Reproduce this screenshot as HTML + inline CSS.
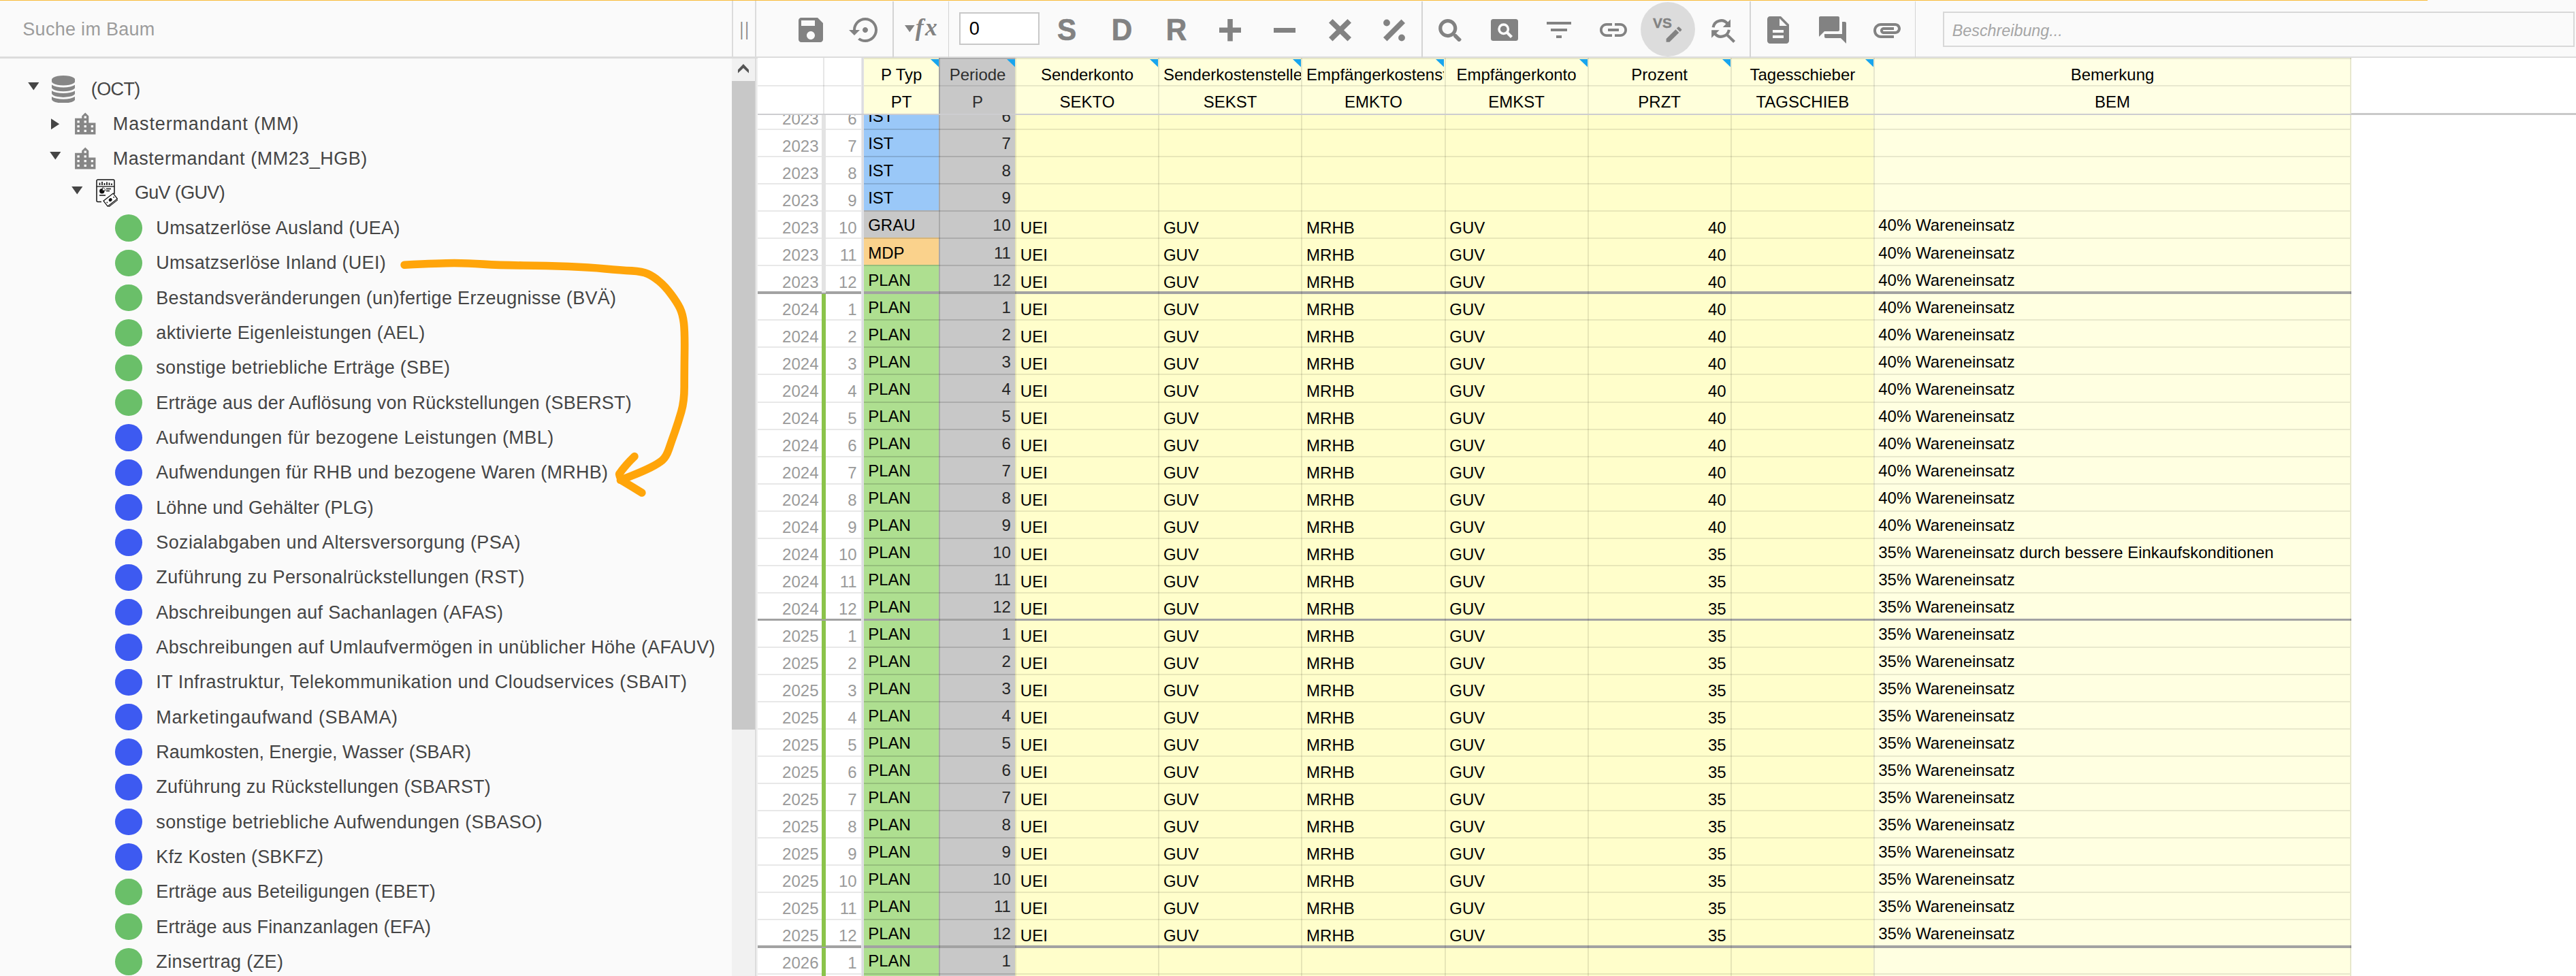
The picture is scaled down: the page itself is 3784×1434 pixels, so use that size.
<!DOCTYPE html>
<html lang="de"><head><meta charset="utf-8"><title>OCT</title>
<style>
*{box-sizing:border-box}
html,body{margin:0;padding:0}
body{width:3784px;height:1434px;overflow:hidden;background:#fafafa;position:relative;font-family:"Liberation Sans",sans-serif}
.abs{position:absolute;display:block}
.tt{position:absolute;white-space:nowrap;font-size:27px;line-height:40px;height:40px;color:#454545}
.dot{width:39.6px;height:39.6px;border-radius:50%}
.gt{position:absolute;white-space:nowrap;font-size:24px;line-height:30px;height:30px;color:#000}
.gt.rh{color:#9a9a9a}
.gt.pd{color:#262626}
.hl{height:2px;background:rgba(0,0,0,.092)}
.vl{width:2px;background:rgba(0,0,0,.095)}
.hc{position:absolute;overflow:hidden;white-space:nowrap;font-size:24px;line-height:30px;height:30px}
.search{left:33.3px;top:23.2px;font-size:27px;letter-spacing:.29px;line-height:40px;color:#9c9c9c;white-space:nowrap}
.fx{left:1344.7px;top:15.600px;font-family:"Liberation Serif","DejaVu Serif",serif;font-style:italic;font-weight:bold;font-size:35.5px;line-height:48px;color:#828282;letter-spacing:2.5px}
.inp0{left:1409px;top:18.2px;width:118px;height:47.6px;border:2px solid #c8c8c8;background:#fff;font-size:27.2px;color:#000}
.inp0 span{position:absolute;left:12.8px;top:6.700px;line-height:30px}
.sdr{top:16px;width:60px;height:56px;text-align:center;font-weight:bold;font-size:43.5px;line-height:56px;color:#828282;-webkit-text-stroke:.7px #828282;transform:scaleX(.97)}
.vs{left:2428px;top:20.8px;font-weight:bold;font-size:20.8px;line-height:26px;color:#828282;letter-spacing:.2px;-webkit-text-stroke:.4px #828282}
.besch{left:2854px;top:17px;width:927.5px;height:51.8px;border:2px solid #d8d8d8;font-style:italic;font-size:23.3px;color:#a6a6a6}
.besch span{position:absolute;left:11.8px;top:8.900px;line-height:34px}
</style></head>
<body>
<div class="abs" style="left:0;top:83.4px;width:3784px;height:2.5px;background:#dcdcdc"></div>
<div class="abs" style="left:1075.2px;top:1.3px;width:1.8px;height:83px;background:#dcdcdc"></div>
<div class="abs" style="left:1109.4px;top:1.3px;width:1.8px;height:1433px;background:#dcdcdc;z-index:3"></div>
<div class="abs" style="left:1078.3px;top:22.500px;width:32.600px;height:40px;text-align:center;font-size:27.5px;line-height:40px;color:#8a8a8a;letter-spacing:2.600px;transform:scaleX(.8)">||</div>
<div class="abs" style="left:1075px;top:85.9px;width:34.2px;height:1349px;background:#f1f1f1"></div>
<div class="abs" style="left:1075px;top:118.8px;width:34.2px;height:952.8px;background:#c8c8c8"></div>
<svg class="abs" style="left:1080px;top:90px" width="24" height="20" viewBox="1080 90 24 20"><path d="M1083.970 102.500L1091.960 93.900 1099.950 102.500V107.600L1091.960 100.100 1083.970 107.600Z" fill="#555"/></svg>
<div class="abs search">Suche im Baum</div>
<div class="tt" id="t0" style="left:133.8px;top:111.15px;letter-spacing:-0.622px">(OCT)</div>
<svg class="abs" style="left:41px;top:121.4px" width="17" height="12" viewBox="0 0 17 12"><path d="M0.2 0H16.4L8.3 11.6Z" fill="#454545"/></svg>
<svg class="abs" style="left:75.9px;top:110.80px" width="34.2" height="40.6" viewBox="0 0 1536 1792" preserveAspectRatio="none" fill="#868686"><path d="M768 768q237 0 443-43t325-127v170q0 69-103 128t-280 93.5-385 34.5-385-34.5-280-93.5-103-128v-170q119 84 325 127t443 43zM768 1536q237 0 443-43t325-127v170q0 69-103 128t-280 93.5-385 34.5-385-34.5-280-93.5-103-128v-170q119 84 325 127t443 43zM768 1152q237 0 443-43t325-127v170q0 69-103 128t-280 93.5-385 34.5-385-34.5-280-93.5-103-128v-170q119 84 325 127t443 43zM768 0q208 0 385 34.5t280 93.5 103 128v128q0 69-103 128t-280 93.5-385 34.5-385-34.5-280-93.5-103-128v-128q0-69 103-128t280-93.5 385-34.5z"/></svg>
<div class="tt" id="t1" style="left:165.8px;top:162.25px;letter-spacing:0.867px">Mastermandant (MM)</div>
<svg class="abs" style="left:74.8px;top:174.4px" width="13" height="17" viewBox="0 0 13 17"><path d="M0 0.2V16.2L12.2 8.2Z" fill="#454545"/></svg>
<svg class="abs" style="left:104.6px;top:162.20px" width="40.500" height="40.500" viewBox="0 0 24 24" fill="#868686"><path d="M15 11V5l-3-3-3 3v2H3v14h18V11h-6zm-8 8H5v-2h2v2zm0-4H5v-2h2v2zm0-4H5V9h2v2zm6 8h-2v-2h2v2zm0-4h-2v-2h2v2zm0-4h-2V9h2v2zm0-4h-2V5h2v2zm6 12h-2v-2h2v2zm0-4h-2v-2h2v2z"/></svg>
<div class="tt" id="t2" style="left:165.8px;top:213.05px;letter-spacing:0.517px">Mastermandant (MM23_HGB)</div>
<svg class="abs" style="left:73px;top:223.3px" width="17" height="12" viewBox="0 0 17 12"><path d="M0.2 0H16.4L8.3 11.6Z" fill="#454545"/></svg>
<svg class="abs" style="left:104.6px;top:213.00px" width="40.500" height="40.500" viewBox="0 0 24 24" fill="#868686"><path d="M15 11V5l-3-3-3 3v2H3v14h18V11h-6zm-8 8H5v-2h2v2zm0-4H5v-2h2v2zm0-4H5V9h2v2zm6 8h-2v-2h2v2zm0-4h-2v-2h2v2zm0-4h-2V9h2v2zm0-4h-2V5h2v2zm6 12h-2v-2h2v2zm0-4h-2v-2h2v2z"/></svg>
<div class="tt" id="t3" style="left:197.9px;top:263.45px;letter-spacing:-0.652px">GuV (GUV)</div>
<svg class="abs" style="left:105px;top:273.7px" width="17" height="12" viewBox="0 0 17 12"><path d="M0.2 0H16.4L8.3 11.6Z" fill="#454545"/></svg>
<svg class="abs" style="left:141.2px;top:263.1px" width="32" height="41" viewBox="0 0 32 41">
<path d="M8 33.5H2.6a1.6 1.6 0 0 1-1.6-1.6V2.6A1.6 1.6 0 0 1 2.600 1H25.400a1.600 1.600 0 0 1 1.600 1.600V22" fill="none" stroke="#111" stroke-width="1.5"/>
<path d="M1 11H27" stroke="#111" stroke-width="1.3"/>
<path d="M5.500 5.500v3.500M9 4v5M12.500 6v3M16 4.500v4.500M19.500 5.500v3.500M23 6.500v2.500" stroke="#111" stroke-width="1.700"/>
<circle cx="8.800" cy="17.800" r="3.700" fill="#111"/>
<path d="M9.600 17V12.800A4.200 4.200 0 0 1 13.800 17Z" fill="#fff" stroke="#111" stroke-width=".8"/>
<path d="M15 14.500h7M15 17.500h5M5 24h9" stroke="#111" stroke-width="1.300"/>
<g transform="rotate(-38 21.500 31)"><rect x="12.500" y="25.500" width="18" height="10" fill="#fff" stroke="#111" stroke-width="1.300"/><rect x="12.500" y="36.600" width="18" height="1.100" fill="#111"/><ellipse cx="21.500" cy="30.500" rx="2.700" ry="2.300" fill="#111"/><circle cx="15.300" cy="30.500" r=".9" fill="#111"/><circle cx="27.700" cy="30.500" r=".9" fill="#111"/></g>
</svg>
<div class="tt" id="t4" style="left:229.3px;top:314.95px;letter-spacing:0.339px">Umsatzerlöse Ausland (UEA)</div>
<div class="abs dot" style="left:169.2px;top:315.20px;background:#6abf69"></div>
<div class="tt" id="t5" style="left:229.3px;top:366.28px;letter-spacing:0.292px">Umsatzserlöse Inland (UEI)</div>
<div class="abs dot" style="left:169.2px;top:366.53px;background:#6abf69"></div>
<div class="tt" id="t6" style="left:229.3px;top:417.62px;letter-spacing:0.309px">Bestandsveränderungen (un)fertige Erzeugnisse (BVÄ)</div>
<div class="abs dot" style="left:169.2px;top:417.87px;background:#6abf69"></div>
<div class="tt" id="t7" style="left:229.3px;top:468.95px;letter-spacing:0.345px">aktivierte Eigenleistungen (AEL)</div>
<div class="abs dot" style="left:169.2px;top:469.20px;background:#6abf69"></div>
<div class="tt" id="t8" style="left:229.3px;top:520.28px;letter-spacing:0.294px">sonstige betriebliche Erträge (SBE)</div>
<div class="abs dot" style="left:169.2px;top:520.53px;background:#6abf69"></div>
<div class="tt" id="t9" style="left:229.3px;top:571.62px;letter-spacing:0.184px">Erträge aus der Auflösung von Rückstellungen (SBERST)</div>
<div class="abs dot" style="left:169.2px;top:571.87px;background:#6abf69"></div>
<div class="tt" id="t10" style="left:229.3px;top:622.95px;letter-spacing:0.439px">Aufwendungen für bezogene Leistungen (MBL)</div>
<div class="abs dot" style="left:169.2px;top:623.20px;background:#3d5af1"></div>
<div class="tt" id="t11" style="left:229.3px;top:674.28px;letter-spacing:0.228px">Aufwendungen für RHB und bezogene Waren (MRHB)</div>
<div class="abs dot" style="left:169.2px;top:674.53px;background:#3d5af1"></div>
<div class="tt" id="t12" style="left:229.3px;top:725.61px;letter-spacing:0.056px">Löhne und Gehälter (PLG)</div>
<div class="abs dot" style="left:169.2px;top:725.86px;background:#3d5af1"></div>
<div class="tt" id="t13" style="left:229.3px;top:776.95px;letter-spacing:0.366px">Sozialabgaben und Altersversorgung (PSA)</div>
<div class="abs dot" style="left:169.2px;top:777.20px;background:#3d5af1"></div>
<div class="tt" id="t14" style="left:229.3px;top:828.28px;letter-spacing:0.359px">Zuführung zu Personalrückstellungen (RST)</div>
<div class="abs dot" style="left:169.2px;top:828.53px;background:#3d5af1"></div>
<div class="tt" id="t15" style="left:229.3px;top:879.61px;letter-spacing:0.271px">Abschreibungen auf Sachanlagen (AFAS)</div>
<div class="abs dot" style="left:169.2px;top:879.86px;background:#3d5af1"></div>
<div class="tt" id="t16" style="left:229.3px;top:930.95px;letter-spacing:0.362px">Abschreibungen auf Umlaufvermögen in unüblicher Höhe (AFAUV)</div>
<div class="abs dot" style="left:169.2px;top:931.20px;background:#3d5af1"></div>
<div class="tt" id="t17" style="left:229.3px;top:982.28px;letter-spacing:0.456px">IT Infrastruktur, Telekommunikation und Cloudservices (SBAIT)</div>
<div class="abs dot" style="left:169.2px;top:982.53px;background:#3d5af1"></div>
<div class="tt" id="t18" style="left:229.3px;top:1033.61px;letter-spacing:0.615px">Marketingaufwand (SBAMA)</div>
<div class="abs dot" style="left:169.2px;top:1033.86px;background:#3d5af1"></div>
<div class="tt" id="t19" style="left:229.3px;top:1084.94px;letter-spacing:-0.044px">Raumkosten, Energie, Wasser (SBAR)</div>
<div class="abs dot" style="left:169.2px;top:1085.19px;background:#3d5af1"></div>
<div class="tt" id="t20" style="left:229.3px;top:1136.28px;letter-spacing:0.193px">Zuführung zu Rückstellungen (SBARST)</div>
<div class="abs dot" style="left:169.2px;top:1136.53px;background:#3d5af1"></div>
<div class="tt" id="t21" style="left:229.3px;top:1187.61px;letter-spacing:0.402px">sonstige betriebliche Aufwendungen (SBASO)</div>
<div class="abs dot" style="left:169.2px;top:1187.86px;background:#3d5af1"></div>
<div class="tt" id="t22" style="left:229.3px;top:1238.94px;letter-spacing:0.149px">Kfz Kosten (SBKFZ)</div>
<div class="abs dot" style="left:169.2px;top:1239.19px;background:#3d5af1"></div>
<div class="tt" id="t23" style="left:229.3px;top:1290.28px;letter-spacing:0.119px">Erträge aus Beteiligungen (EBET)</div>
<div class="abs dot" style="left:169.2px;top:1290.53px;background:#6abf69"></div>
<div class="tt" id="t24" style="left:229.3px;top:1341.61px;letter-spacing:0.099px">Erträge aus Finanzanlagen (EFA)</div>
<div class="abs dot" style="left:169.2px;top:1341.86px;background:#6abf69"></div>
<div class="tt" id="t25" style="left:229.3px;top:1392.94px;letter-spacing:0.362px">Zinsertrag (ZE)</div>
<div class="abs dot" style="left:169.2px;top:1393.19px;background:#6abf69"></div>
<div class="abs" style="left:1112.9px;top:85px;width:2671.1px;height:1349px;background:#fff"></div>
<div class="abs" style="left:1490.9px;top:168.8px;width:1261.1px;height:1265.2px;background:#fffecb"></div>
<div class="abs" style="left:2752.0px;top:168.8px;width:702.0px;height:1265.2px;background:#ffffe1"></div>
<div class="abs" style="left:1379.3px;top:168.8px;width:111.60000000000014px;height:1265.2px;background:#c8c8c8"></div>
<div class="abs" style="left:1269.0px;top:149.17px;width:110.29999999999995px;height:40.53px;background:#9ac8f8"></div>
<div class="gt rh" style="right:2581.5px;top:159.55px">2023</div>
<div class="gt rh" style="right:2525.3px;top:159.55px">6</div>
<div class="gt " style="left:1275.2px;top:156.35px">IST</div>
<div class="gt pd" style="right:2299.1px;top:156.35px">6</div>
<div class="abs" style="left:1269.0px;top:189.20px;width:110.29999999999995px;height:40.53px;background:#9ac8f8"></div>
<div class="gt rh" style="right:2581.5px;top:199.58px">2023</div>
<div class="gt rh" style="right:2525.3px;top:199.58px">7</div>
<div class="gt " style="left:1275.2px;top:196.38px">IST</div>
<div class="gt pd" style="right:2299.1px;top:196.38px">7</div>
<div class="abs" style="left:1269.0px;top:229.23px;width:110.29999999999995px;height:40.53px;background:#9ac8f8"></div>
<div class="gt rh" style="right:2581.5px;top:239.61px">2023</div>
<div class="gt rh" style="right:2525.3px;top:239.61px">8</div>
<div class="gt " style="left:1275.2px;top:236.41px">IST</div>
<div class="gt pd" style="right:2299.1px;top:236.41px">8</div>
<div class="abs" style="left:1269.0px;top:269.26px;width:110.29999999999995px;height:40.53px;background:#9ac8f8"></div>
<div class="gt rh" style="right:2581.5px;top:279.64px">2023</div>
<div class="gt rh" style="right:2525.3px;top:279.64px">9</div>
<div class="gt " style="left:1275.2px;top:276.44px">IST</div>
<div class="gt pd" style="right:2299.1px;top:276.44px">9</div>
<div class="abs" style="left:1269.0px;top:309.29px;width:110.29999999999995px;height:40.53px;background:#c8c8c8"></div>
<div class="gt rh" style="right:2581.5px;top:319.67px">2023</div>
<div class="gt rh" style="right:2525.3px;top:319.67px">10</div>
<div class="gt " style="left:1275.2px;top:316.47px">GRAU</div>
<div class="gt pd" style="right:2299.1px;top:316.47px">10</div>
<div class="gt " style="left:1498.8px;top:319.67px">UEI</div>
<div class="gt " style="left:1708.9px;top:319.67px">GUV</div>
<div class="gt " style="left:1919.1px;top:319.67px">MRHB</div>
<div class="gt " style="left:2129.3px;top:319.67px">GUV</div>
<div class="gt " style="right:1248.4px;top:319.67px">40</div>
<div class="gt " style="left:2759.2px;top:316.47px">40% Wareneinsatz</div>
<div class="abs" style="left:1269.0px;top:349.32px;width:110.29999999999995px;height:40.53px;background:#fad28c"></div>
<div class="gt rh" style="right:2581.5px;top:359.70px">2023</div>
<div class="gt rh" style="right:2525.3px;top:359.70px">11</div>
<div class="gt " style="left:1275.2px;top:356.50px">MDP</div>
<div class="gt pd" style="right:2299.1px;top:356.50px">11</div>
<div class="gt " style="left:1498.8px;top:359.70px">UEI</div>
<div class="gt " style="left:1708.9px;top:359.70px">GUV</div>
<div class="gt " style="left:1919.1px;top:359.70px">MRHB</div>
<div class="gt " style="left:2129.3px;top:359.70px">GUV</div>
<div class="gt " style="right:1248.4px;top:359.70px">40</div>
<div class="gt " style="left:2759.2px;top:356.50px">40% Wareneinsatz</div>
<div class="abs" style="left:1269.0px;top:389.35px;width:110.29999999999995px;height:40.53px;background:#aedf90"></div>
<div class="gt rh" style="right:2581.5px;top:399.73px">2023</div>
<div class="gt rh" style="right:2525.3px;top:399.73px">12</div>
<div class="gt " style="left:1275.2px;top:396.53px">PLAN</div>
<div class="gt pd" style="right:2299.1px;top:396.53px">12</div>
<div class="gt " style="left:1498.8px;top:399.73px">UEI</div>
<div class="gt " style="left:1708.9px;top:399.73px">GUV</div>
<div class="gt " style="left:1919.1px;top:399.73px">MRHB</div>
<div class="gt " style="left:2129.3px;top:399.73px">GUV</div>
<div class="gt " style="right:1248.4px;top:399.73px">40</div>
<div class="gt " style="left:2759.2px;top:396.53px">40% Wareneinsatz</div>
<div class="abs" style="left:1269.0px;top:429.38px;width:110.29999999999995px;height:40.53px;background:#aedf90"></div>
<div class="gt rh" style="right:2581.5px;top:439.76px">2024</div>
<div class="gt rh" style="right:2525.3px;top:439.76px">1</div>
<div class="gt " style="left:1275.2px;top:436.56px">PLAN</div>
<div class="gt pd" style="right:2299.1px;top:436.56px">1</div>
<div class="gt " style="left:1498.8px;top:439.76px">UEI</div>
<div class="gt " style="left:1708.9px;top:439.76px">GUV</div>
<div class="gt " style="left:1919.1px;top:439.76px">MRHB</div>
<div class="gt " style="left:2129.3px;top:439.76px">GUV</div>
<div class="gt " style="right:1248.4px;top:439.76px">40</div>
<div class="gt " style="left:2759.2px;top:436.56px">40% Wareneinsatz</div>
<div class="abs" style="left:1269.0px;top:469.41px;width:110.29999999999995px;height:40.53px;background:#aedf90"></div>
<div class="gt rh" style="right:2581.5px;top:479.79px">2024</div>
<div class="gt rh" style="right:2525.3px;top:479.79px">2</div>
<div class="gt " style="left:1275.2px;top:476.59px">PLAN</div>
<div class="gt pd" style="right:2299.1px;top:476.59px">2</div>
<div class="gt " style="left:1498.8px;top:479.79px">UEI</div>
<div class="gt " style="left:1708.9px;top:479.79px">GUV</div>
<div class="gt " style="left:1919.1px;top:479.79px">MRHB</div>
<div class="gt " style="left:2129.3px;top:479.79px">GUV</div>
<div class="gt " style="right:1248.4px;top:479.79px">40</div>
<div class="gt " style="left:2759.2px;top:476.59px">40% Wareneinsatz</div>
<div class="abs" style="left:1269.0px;top:509.44px;width:110.29999999999995px;height:40.53px;background:#aedf90"></div>
<div class="gt rh" style="right:2581.5px;top:519.82px">2024</div>
<div class="gt rh" style="right:2525.3px;top:519.82px">3</div>
<div class="gt " style="left:1275.2px;top:516.62px">PLAN</div>
<div class="gt pd" style="right:2299.1px;top:516.62px">3</div>
<div class="gt " style="left:1498.8px;top:519.82px">UEI</div>
<div class="gt " style="left:1708.9px;top:519.82px">GUV</div>
<div class="gt " style="left:1919.1px;top:519.82px">MRHB</div>
<div class="gt " style="left:2129.3px;top:519.82px">GUV</div>
<div class="gt " style="right:1248.4px;top:519.82px">40</div>
<div class="gt " style="left:2759.2px;top:516.62px">40% Wareneinsatz</div>
<div class="abs" style="left:1269.0px;top:549.47px;width:110.29999999999995px;height:40.53px;background:#aedf90"></div>
<div class="gt rh" style="right:2581.5px;top:559.85px">2024</div>
<div class="gt rh" style="right:2525.3px;top:559.85px">4</div>
<div class="gt " style="left:1275.2px;top:556.65px">PLAN</div>
<div class="gt pd" style="right:2299.1px;top:556.65px">4</div>
<div class="gt " style="left:1498.8px;top:559.85px">UEI</div>
<div class="gt " style="left:1708.9px;top:559.85px">GUV</div>
<div class="gt " style="left:1919.1px;top:559.85px">MRHB</div>
<div class="gt " style="left:2129.3px;top:559.85px">GUV</div>
<div class="gt " style="right:1248.4px;top:559.85px">40</div>
<div class="gt " style="left:2759.2px;top:556.65px">40% Wareneinsatz</div>
<div class="abs" style="left:1269.0px;top:589.50px;width:110.29999999999995px;height:40.53px;background:#aedf90"></div>
<div class="gt rh" style="right:2581.5px;top:599.88px">2024</div>
<div class="gt rh" style="right:2525.3px;top:599.88px">5</div>
<div class="gt " style="left:1275.2px;top:596.68px">PLAN</div>
<div class="gt pd" style="right:2299.1px;top:596.68px">5</div>
<div class="gt " style="left:1498.8px;top:599.88px">UEI</div>
<div class="gt " style="left:1708.9px;top:599.88px">GUV</div>
<div class="gt " style="left:1919.1px;top:599.88px">MRHB</div>
<div class="gt " style="left:2129.3px;top:599.88px">GUV</div>
<div class="gt " style="right:1248.4px;top:599.88px">40</div>
<div class="gt " style="left:2759.2px;top:596.68px">40% Wareneinsatz</div>
<div class="abs" style="left:1269.0px;top:629.53px;width:110.29999999999995px;height:40.53px;background:#aedf90"></div>
<div class="gt rh" style="right:2581.5px;top:639.91px">2024</div>
<div class="gt rh" style="right:2525.3px;top:639.91px">6</div>
<div class="gt " style="left:1275.2px;top:636.71px">PLAN</div>
<div class="gt pd" style="right:2299.1px;top:636.71px">6</div>
<div class="gt " style="left:1498.8px;top:639.91px">UEI</div>
<div class="gt " style="left:1708.9px;top:639.91px">GUV</div>
<div class="gt " style="left:1919.1px;top:639.91px">MRHB</div>
<div class="gt " style="left:2129.3px;top:639.91px">GUV</div>
<div class="gt " style="right:1248.4px;top:639.91px">40</div>
<div class="gt " style="left:2759.2px;top:636.71px">40% Wareneinsatz</div>
<div class="abs" style="left:1269.0px;top:669.56px;width:110.29999999999995px;height:40.53px;background:#aedf90"></div>
<div class="gt rh" style="right:2581.5px;top:679.94px">2024</div>
<div class="gt rh" style="right:2525.3px;top:679.94px">7</div>
<div class="gt " style="left:1275.2px;top:676.74px">PLAN</div>
<div class="gt pd" style="right:2299.1px;top:676.74px">7</div>
<div class="gt " style="left:1498.8px;top:679.94px">UEI</div>
<div class="gt " style="left:1708.9px;top:679.94px">GUV</div>
<div class="gt " style="left:1919.1px;top:679.94px">MRHB</div>
<div class="gt " style="left:2129.3px;top:679.94px">GUV</div>
<div class="gt " style="right:1248.4px;top:679.94px">40</div>
<div class="gt " style="left:2759.2px;top:676.74px">40% Wareneinsatz</div>
<div class="abs" style="left:1269.0px;top:709.59px;width:110.29999999999995px;height:40.53px;background:#aedf90"></div>
<div class="gt rh" style="right:2581.5px;top:719.97px">2024</div>
<div class="gt rh" style="right:2525.3px;top:719.97px">8</div>
<div class="gt " style="left:1275.2px;top:716.77px">PLAN</div>
<div class="gt pd" style="right:2299.1px;top:716.77px">8</div>
<div class="gt " style="left:1498.8px;top:719.97px">UEI</div>
<div class="gt " style="left:1708.9px;top:719.97px">GUV</div>
<div class="gt " style="left:1919.1px;top:719.97px">MRHB</div>
<div class="gt " style="left:2129.3px;top:719.97px">GUV</div>
<div class="gt " style="right:1248.4px;top:719.97px">40</div>
<div class="gt " style="left:2759.2px;top:716.77px">40% Wareneinsatz</div>
<div class="abs" style="left:1269.0px;top:749.62px;width:110.29999999999995px;height:40.53px;background:#aedf90"></div>
<div class="gt rh" style="right:2581.5px;top:760.00px">2024</div>
<div class="gt rh" style="right:2525.3px;top:760.00px">9</div>
<div class="gt " style="left:1275.2px;top:756.80px">PLAN</div>
<div class="gt pd" style="right:2299.1px;top:756.80px">9</div>
<div class="gt " style="left:1498.8px;top:760.00px">UEI</div>
<div class="gt " style="left:1708.9px;top:760.00px">GUV</div>
<div class="gt " style="left:1919.1px;top:760.00px">MRHB</div>
<div class="gt " style="left:2129.3px;top:760.00px">GUV</div>
<div class="gt " style="right:1248.4px;top:760.00px">40</div>
<div class="gt " style="left:2759.2px;top:756.80px">40% Wareneinsatz</div>
<div class="abs" style="left:1269.0px;top:789.65px;width:110.29999999999995px;height:40.53px;background:#aedf90"></div>
<div class="gt rh" style="right:2581.5px;top:800.03px">2024</div>
<div class="gt rh" style="right:2525.3px;top:800.03px">10</div>
<div class="gt " style="left:1275.2px;top:796.83px">PLAN</div>
<div class="gt pd" style="right:2299.1px;top:796.83px">10</div>
<div class="gt " style="left:1498.8px;top:800.03px">UEI</div>
<div class="gt " style="left:1708.9px;top:800.03px">GUV</div>
<div class="gt " style="left:1919.1px;top:800.03px">MRHB</div>
<div class="gt " style="left:2129.3px;top:800.03px">GUV</div>
<div class="gt " style="right:1248.4px;top:800.03px">35</div>
<div class="gt " style="left:2759.2px;top:796.83px">35% Wareneinsatz durch bessere Einkaufskonditionen</div>
<div class="abs" style="left:1269.0px;top:829.68px;width:110.29999999999995px;height:40.53px;background:#aedf90"></div>
<div class="gt rh" style="right:2581.5px;top:840.06px">2024</div>
<div class="gt rh" style="right:2525.3px;top:840.06px">11</div>
<div class="gt " style="left:1275.2px;top:836.86px">PLAN</div>
<div class="gt pd" style="right:2299.1px;top:836.86px">11</div>
<div class="gt " style="left:1498.8px;top:840.06px">UEI</div>
<div class="gt " style="left:1708.9px;top:840.06px">GUV</div>
<div class="gt " style="left:1919.1px;top:840.06px">MRHB</div>
<div class="gt " style="left:2129.3px;top:840.06px">GUV</div>
<div class="gt " style="right:1248.4px;top:840.06px">35</div>
<div class="gt " style="left:2759.2px;top:836.86px">35% Wareneinsatz</div>
<div class="abs" style="left:1269.0px;top:869.71px;width:110.29999999999995px;height:40.53px;background:#aedf90"></div>
<div class="gt rh" style="right:2581.5px;top:880.09px">2024</div>
<div class="gt rh" style="right:2525.3px;top:880.09px">12</div>
<div class="gt " style="left:1275.2px;top:876.89px">PLAN</div>
<div class="gt pd" style="right:2299.1px;top:876.89px">12</div>
<div class="gt " style="left:1498.8px;top:880.09px">UEI</div>
<div class="gt " style="left:1708.9px;top:880.09px">GUV</div>
<div class="gt " style="left:1919.1px;top:880.09px">MRHB</div>
<div class="gt " style="left:2129.3px;top:880.09px">GUV</div>
<div class="gt " style="right:1248.4px;top:880.09px">35</div>
<div class="gt " style="left:2759.2px;top:876.89px">35% Wareneinsatz</div>
<div class="abs" style="left:1269.0px;top:909.74px;width:110.29999999999995px;height:40.53px;background:#aedf90"></div>
<div class="gt rh" style="right:2581.5px;top:920.12px">2025</div>
<div class="gt rh" style="right:2525.3px;top:920.12px">1</div>
<div class="gt " style="left:1275.2px;top:916.92px">PLAN</div>
<div class="gt pd" style="right:2299.1px;top:916.92px">1</div>
<div class="gt " style="left:1498.8px;top:920.12px">UEI</div>
<div class="gt " style="left:1708.9px;top:920.12px">GUV</div>
<div class="gt " style="left:1919.1px;top:920.12px">MRHB</div>
<div class="gt " style="left:2129.3px;top:920.12px">GUV</div>
<div class="gt " style="right:1248.4px;top:920.12px">35</div>
<div class="gt " style="left:2759.2px;top:916.92px">35% Wareneinsatz</div>
<div class="abs" style="left:1269.0px;top:949.77px;width:110.29999999999995px;height:40.53px;background:#aedf90"></div>
<div class="gt rh" style="right:2581.5px;top:960.15px">2025</div>
<div class="gt rh" style="right:2525.3px;top:960.15px">2</div>
<div class="gt " style="left:1275.2px;top:956.95px">PLAN</div>
<div class="gt pd" style="right:2299.1px;top:956.95px">2</div>
<div class="gt " style="left:1498.8px;top:960.15px">UEI</div>
<div class="gt " style="left:1708.9px;top:960.15px">GUV</div>
<div class="gt " style="left:1919.1px;top:960.15px">MRHB</div>
<div class="gt " style="left:2129.3px;top:960.15px">GUV</div>
<div class="gt " style="right:1248.4px;top:960.15px">35</div>
<div class="gt " style="left:2759.2px;top:956.95px">35% Wareneinsatz</div>
<div class="abs" style="left:1269.0px;top:989.80px;width:110.29999999999995px;height:40.53px;background:#aedf90"></div>
<div class="gt rh" style="right:2581.5px;top:1000.18px">2025</div>
<div class="gt rh" style="right:2525.3px;top:1000.18px">3</div>
<div class="gt " style="left:1275.2px;top:996.98px">PLAN</div>
<div class="gt pd" style="right:2299.1px;top:996.98px">3</div>
<div class="gt " style="left:1498.8px;top:1000.18px">UEI</div>
<div class="gt " style="left:1708.9px;top:1000.18px">GUV</div>
<div class="gt " style="left:1919.1px;top:1000.18px">MRHB</div>
<div class="gt " style="left:2129.3px;top:1000.18px">GUV</div>
<div class="gt " style="right:1248.4px;top:1000.18px">35</div>
<div class="gt " style="left:2759.2px;top:996.98px">35% Wareneinsatz</div>
<div class="abs" style="left:1269.0px;top:1029.83px;width:110.29999999999995px;height:40.53px;background:#aedf90"></div>
<div class="gt rh" style="right:2581.5px;top:1040.21px">2025</div>
<div class="gt rh" style="right:2525.3px;top:1040.21px">4</div>
<div class="gt " style="left:1275.2px;top:1037.01px">PLAN</div>
<div class="gt pd" style="right:2299.1px;top:1037.01px">4</div>
<div class="gt " style="left:1498.8px;top:1040.21px">UEI</div>
<div class="gt " style="left:1708.9px;top:1040.21px">GUV</div>
<div class="gt " style="left:1919.1px;top:1040.21px">MRHB</div>
<div class="gt " style="left:2129.3px;top:1040.21px">GUV</div>
<div class="gt " style="right:1248.4px;top:1040.21px">35</div>
<div class="gt " style="left:2759.2px;top:1037.01px">35% Wareneinsatz</div>
<div class="abs" style="left:1269.0px;top:1069.86px;width:110.29999999999995px;height:40.53px;background:#aedf90"></div>
<div class="gt rh" style="right:2581.5px;top:1080.24px">2025</div>
<div class="gt rh" style="right:2525.3px;top:1080.24px">5</div>
<div class="gt " style="left:1275.2px;top:1077.04px">PLAN</div>
<div class="gt pd" style="right:2299.1px;top:1077.04px">5</div>
<div class="gt " style="left:1498.8px;top:1080.24px">UEI</div>
<div class="gt " style="left:1708.9px;top:1080.24px">GUV</div>
<div class="gt " style="left:1919.1px;top:1080.24px">MRHB</div>
<div class="gt " style="left:2129.3px;top:1080.24px">GUV</div>
<div class="gt " style="right:1248.4px;top:1080.24px">35</div>
<div class="gt " style="left:2759.2px;top:1077.04px">35% Wareneinsatz</div>
<div class="abs" style="left:1269.0px;top:1109.89px;width:110.29999999999995px;height:40.53px;background:#aedf90"></div>
<div class="gt rh" style="right:2581.5px;top:1120.27px">2025</div>
<div class="gt rh" style="right:2525.3px;top:1120.27px">6</div>
<div class="gt " style="left:1275.2px;top:1117.07px">PLAN</div>
<div class="gt pd" style="right:2299.1px;top:1117.07px">6</div>
<div class="gt " style="left:1498.8px;top:1120.27px">UEI</div>
<div class="gt " style="left:1708.9px;top:1120.27px">GUV</div>
<div class="gt " style="left:1919.1px;top:1120.27px">MRHB</div>
<div class="gt " style="left:2129.3px;top:1120.27px">GUV</div>
<div class="gt " style="right:1248.4px;top:1120.27px">35</div>
<div class="gt " style="left:2759.2px;top:1117.07px">35% Wareneinsatz</div>
<div class="abs" style="left:1269.0px;top:1149.92px;width:110.29999999999995px;height:40.53px;background:#aedf90"></div>
<div class="gt rh" style="right:2581.5px;top:1160.30px">2025</div>
<div class="gt rh" style="right:2525.3px;top:1160.30px">7</div>
<div class="gt " style="left:1275.2px;top:1157.10px">PLAN</div>
<div class="gt pd" style="right:2299.1px;top:1157.10px">7</div>
<div class="gt " style="left:1498.8px;top:1160.30px">UEI</div>
<div class="gt " style="left:1708.9px;top:1160.30px">GUV</div>
<div class="gt " style="left:1919.1px;top:1160.30px">MRHB</div>
<div class="gt " style="left:2129.3px;top:1160.30px">GUV</div>
<div class="gt " style="right:1248.4px;top:1160.30px">35</div>
<div class="gt " style="left:2759.2px;top:1157.10px">35% Wareneinsatz</div>
<div class="abs" style="left:1269.0px;top:1189.95px;width:110.29999999999995px;height:40.53px;background:#aedf90"></div>
<div class="gt rh" style="right:2581.5px;top:1200.33px">2025</div>
<div class="gt rh" style="right:2525.3px;top:1200.33px">8</div>
<div class="gt " style="left:1275.2px;top:1197.13px">PLAN</div>
<div class="gt pd" style="right:2299.1px;top:1197.13px">8</div>
<div class="gt " style="left:1498.8px;top:1200.33px">UEI</div>
<div class="gt " style="left:1708.9px;top:1200.33px">GUV</div>
<div class="gt " style="left:1919.1px;top:1200.33px">MRHB</div>
<div class="gt " style="left:2129.3px;top:1200.33px">GUV</div>
<div class="gt " style="right:1248.4px;top:1200.33px">35</div>
<div class="gt " style="left:2759.2px;top:1197.13px">35% Wareneinsatz</div>
<div class="abs" style="left:1269.0px;top:1229.98px;width:110.29999999999995px;height:40.53px;background:#aedf90"></div>
<div class="gt rh" style="right:2581.5px;top:1240.36px">2025</div>
<div class="gt rh" style="right:2525.3px;top:1240.36px">9</div>
<div class="gt " style="left:1275.2px;top:1237.16px">PLAN</div>
<div class="gt pd" style="right:2299.1px;top:1237.16px">9</div>
<div class="gt " style="left:1498.8px;top:1240.36px">UEI</div>
<div class="gt " style="left:1708.9px;top:1240.36px">GUV</div>
<div class="gt " style="left:1919.1px;top:1240.36px">MRHB</div>
<div class="gt " style="left:2129.3px;top:1240.36px">GUV</div>
<div class="gt " style="right:1248.4px;top:1240.36px">35</div>
<div class="gt " style="left:2759.2px;top:1237.16px">35% Wareneinsatz</div>
<div class="abs" style="left:1269.0px;top:1270.01px;width:110.29999999999995px;height:40.53px;background:#aedf90"></div>
<div class="gt rh" style="right:2581.5px;top:1280.39px">2025</div>
<div class="gt rh" style="right:2525.3px;top:1280.39px">10</div>
<div class="gt " style="left:1275.2px;top:1277.19px">PLAN</div>
<div class="gt pd" style="right:2299.1px;top:1277.19px">10</div>
<div class="gt " style="left:1498.8px;top:1280.39px">UEI</div>
<div class="gt " style="left:1708.9px;top:1280.39px">GUV</div>
<div class="gt " style="left:1919.1px;top:1280.39px">MRHB</div>
<div class="gt " style="left:2129.3px;top:1280.39px">GUV</div>
<div class="gt " style="right:1248.4px;top:1280.39px">35</div>
<div class="gt " style="left:2759.2px;top:1277.19px">35% Wareneinsatz</div>
<div class="abs" style="left:1269.0px;top:1310.04px;width:110.29999999999995px;height:40.53px;background:#aedf90"></div>
<div class="gt rh" style="right:2581.5px;top:1320.42px">2025</div>
<div class="gt rh" style="right:2525.3px;top:1320.42px">11</div>
<div class="gt " style="left:1275.2px;top:1317.22px">PLAN</div>
<div class="gt pd" style="right:2299.1px;top:1317.22px">11</div>
<div class="gt " style="left:1498.8px;top:1320.42px">UEI</div>
<div class="gt " style="left:1708.9px;top:1320.42px">GUV</div>
<div class="gt " style="left:1919.1px;top:1320.42px">MRHB</div>
<div class="gt " style="left:2129.3px;top:1320.42px">GUV</div>
<div class="gt " style="right:1248.4px;top:1320.42px">35</div>
<div class="gt " style="left:2759.2px;top:1317.22px">35% Wareneinsatz</div>
<div class="abs" style="left:1269.0px;top:1350.07px;width:110.29999999999995px;height:40.53px;background:#aedf90"></div>
<div class="gt rh" style="right:2581.5px;top:1360.45px">2025</div>
<div class="gt rh" style="right:2525.3px;top:1360.45px">12</div>
<div class="gt " style="left:1275.2px;top:1357.25px">PLAN</div>
<div class="gt pd" style="right:2299.1px;top:1357.25px">12</div>
<div class="gt " style="left:1498.8px;top:1360.45px">UEI</div>
<div class="gt " style="left:1708.9px;top:1360.45px">GUV</div>
<div class="gt " style="left:1919.1px;top:1360.45px">MRHB</div>
<div class="gt " style="left:2129.3px;top:1360.45px">GUV</div>
<div class="gt " style="right:1248.4px;top:1360.45px">35</div>
<div class="gt " style="left:2759.2px;top:1357.25px">35% Wareneinsatz</div>
<div class="abs" style="left:1269.0px;top:1390.10px;width:110.29999999999995px;height:40.53px;background:#aedf90"></div>
<div class="gt rh" style="right:2581.5px;top:1400.48px">2026</div>
<div class="gt rh" style="right:2525.3px;top:1400.48px">1</div>
<div class="gt " style="left:1275.2px;top:1397.28px">PLAN</div>
<div class="gt pd" style="right:2299.1px;top:1397.28px">1</div>
<div class="abs" style="left:1269.0px;top:1430.13px;width:110.29999999999995px;height:40.53px;background:#aedf90"></div>
<div class="gt rh" style="right:2581.5px;top:1440.51px">2026</div>
<div class="gt rh" style="right:2525.3px;top:1440.51px">2</div>
<div class="gt " style="left:1275.2px;top:1437.31px">PLAN</div>
<div class="gt pd" style="right:2299.1px;top:1437.31px">2</div>
<div class="abs hl" style="left:1112.9px;top:189.20px;width:152.19999999999982px"></div>
<div class="abs hl" style="left:1269.0px;top:189.20px;width:2183.0px"></div>
<div class="abs" style="left:1269.0px;top:189.20px;width:221.9000000000001px;height:2px;background:rgba(0,0,0,.05)"></div>
<div class="abs hl" style="left:1112.9px;top:229.23px;width:152.19999999999982px"></div>
<div class="abs hl" style="left:1269.0px;top:229.23px;width:2183.0px"></div>
<div class="abs" style="left:1269.0px;top:229.23px;width:221.9000000000001px;height:2px;background:rgba(0,0,0,.05)"></div>
<div class="abs hl" style="left:1112.9px;top:269.26px;width:152.19999999999982px"></div>
<div class="abs hl" style="left:1269.0px;top:269.26px;width:2183.0px"></div>
<div class="abs" style="left:1269.0px;top:269.26px;width:221.9000000000001px;height:2px;background:rgba(0,0,0,.05)"></div>
<div class="abs hl" style="left:1112.9px;top:309.29px;width:152.19999999999982px"></div>
<div class="abs hl" style="left:1269.0px;top:309.29px;width:2183.0px"></div>
<div class="abs" style="left:1269.0px;top:309.29px;width:221.9000000000001px;height:2px;background:rgba(0,0,0,.05)"></div>
<div class="abs hl" style="left:1112.9px;top:349.32px;width:152.19999999999982px"></div>
<div class="abs hl" style="left:1269.0px;top:349.32px;width:2183.0px"></div>
<div class="abs" style="left:1269.0px;top:349.32px;width:221.9000000000001px;height:2px;background:rgba(0,0,0,.05)"></div>
<div class="abs hl" style="left:1112.9px;top:389.35px;width:152.19999999999982px"></div>
<div class="abs hl" style="left:1269.0px;top:389.35px;width:2183.0px"></div>
<div class="abs" style="left:1269.0px;top:389.35px;width:221.9000000000001px;height:2px;background:rgba(0,0,0,.05)"></div>
<div class="abs" style="left:1111px;top:428.38px;width:154.0999999999999px;height:3.7px;background:#a2a2a2"></div>
<div class="abs" style="left:1269.0px;top:428.38px;width:2185.0px;height:3.7px;background:#a2a2a2"></div>
<div class="abs hl" style="left:1112.9px;top:469.41px;width:152.19999999999982px"></div>
<div class="abs hl" style="left:1269.0px;top:469.41px;width:2183.0px"></div>
<div class="abs" style="left:1269.0px;top:469.41px;width:221.9000000000001px;height:2px;background:rgba(0,0,0,.05)"></div>
<div class="abs hl" style="left:1112.9px;top:509.44px;width:152.19999999999982px"></div>
<div class="abs hl" style="left:1269.0px;top:509.44px;width:2183.0px"></div>
<div class="abs" style="left:1269.0px;top:509.44px;width:221.9000000000001px;height:2px;background:rgba(0,0,0,.05)"></div>
<div class="abs hl" style="left:1112.9px;top:549.47px;width:152.19999999999982px"></div>
<div class="abs hl" style="left:1269.0px;top:549.47px;width:2183.0px"></div>
<div class="abs" style="left:1269.0px;top:549.47px;width:221.9000000000001px;height:2px;background:rgba(0,0,0,.05)"></div>
<div class="abs hl" style="left:1112.9px;top:589.50px;width:152.19999999999982px"></div>
<div class="abs hl" style="left:1269.0px;top:589.50px;width:2183.0px"></div>
<div class="abs" style="left:1269.0px;top:589.50px;width:221.9000000000001px;height:2px;background:rgba(0,0,0,.05)"></div>
<div class="abs hl" style="left:1112.9px;top:629.53px;width:152.19999999999982px"></div>
<div class="abs hl" style="left:1269.0px;top:629.53px;width:2183.0px"></div>
<div class="abs" style="left:1269.0px;top:629.53px;width:221.9000000000001px;height:2px;background:rgba(0,0,0,.05)"></div>
<div class="abs hl" style="left:1112.9px;top:669.56px;width:152.19999999999982px"></div>
<div class="abs hl" style="left:1269.0px;top:669.56px;width:2183.0px"></div>
<div class="abs" style="left:1269.0px;top:669.56px;width:221.9000000000001px;height:2px;background:rgba(0,0,0,.05)"></div>
<div class="abs hl" style="left:1112.9px;top:709.59px;width:152.19999999999982px"></div>
<div class="abs hl" style="left:1269.0px;top:709.59px;width:2183.0px"></div>
<div class="abs" style="left:1269.0px;top:709.59px;width:221.9000000000001px;height:2px;background:rgba(0,0,0,.05)"></div>
<div class="abs hl" style="left:1112.9px;top:749.62px;width:152.19999999999982px"></div>
<div class="abs hl" style="left:1269.0px;top:749.62px;width:2183.0px"></div>
<div class="abs" style="left:1269.0px;top:749.62px;width:221.9000000000001px;height:2px;background:rgba(0,0,0,.05)"></div>
<div class="abs hl" style="left:1112.9px;top:789.65px;width:152.19999999999982px"></div>
<div class="abs hl" style="left:1269.0px;top:789.65px;width:2183.0px"></div>
<div class="abs" style="left:1269.0px;top:789.65px;width:221.9000000000001px;height:2px;background:rgba(0,0,0,.05)"></div>
<div class="abs hl" style="left:1112.9px;top:829.68px;width:152.19999999999982px"></div>
<div class="abs hl" style="left:1269.0px;top:829.68px;width:2183.0px"></div>
<div class="abs" style="left:1269.0px;top:829.68px;width:221.9000000000001px;height:2px;background:rgba(0,0,0,.05)"></div>
<div class="abs hl" style="left:1112.9px;top:869.71px;width:152.19999999999982px"></div>
<div class="abs hl" style="left:1269.0px;top:869.71px;width:2183.0px"></div>
<div class="abs" style="left:1269.0px;top:869.71px;width:221.9000000000001px;height:2px;background:rgba(0,0,0,.05)"></div>
<div class="abs" style="left:1111px;top:908.74px;width:154.0999999999999px;height:3.7px;background:#a2a2a2"></div>
<div class="abs" style="left:1269.0px;top:908.74px;width:2185.0px;height:3.7px;background:#a2a2a2"></div>
<div class="abs hl" style="left:1112.9px;top:949.77px;width:152.19999999999982px"></div>
<div class="abs hl" style="left:1269.0px;top:949.77px;width:2183.0px"></div>
<div class="abs" style="left:1269.0px;top:949.77px;width:221.9000000000001px;height:2px;background:rgba(0,0,0,.05)"></div>
<div class="abs hl" style="left:1112.9px;top:989.80px;width:152.19999999999982px"></div>
<div class="abs hl" style="left:1269.0px;top:989.80px;width:2183.0px"></div>
<div class="abs" style="left:1269.0px;top:989.80px;width:221.9000000000001px;height:2px;background:rgba(0,0,0,.05)"></div>
<div class="abs hl" style="left:1112.9px;top:1029.83px;width:152.19999999999982px"></div>
<div class="abs hl" style="left:1269.0px;top:1029.83px;width:2183.0px"></div>
<div class="abs" style="left:1269.0px;top:1029.83px;width:221.9000000000001px;height:2px;background:rgba(0,0,0,.05)"></div>
<div class="abs hl" style="left:1112.9px;top:1069.86px;width:152.19999999999982px"></div>
<div class="abs hl" style="left:1269.0px;top:1069.86px;width:2183.0px"></div>
<div class="abs" style="left:1269.0px;top:1069.86px;width:221.9000000000001px;height:2px;background:rgba(0,0,0,.05)"></div>
<div class="abs hl" style="left:1112.9px;top:1109.89px;width:152.19999999999982px"></div>
<div class="abs hl" style="left:1269.0px;top:1109.89px;width:2183.0px"></div>
<div class="abs" style="left:1269.0px;top:1109.89px;width:221.9000000000001px;height:2px;background:rgba(0,0,0,.05)"></div>
<div class="abs hl" style="left:1112.9px;top:1149.92px;width:152.19999999999982px"></div>
<div class="abs hl" style="left:1269.0px;top:1149.92px;width:2183.0px"></div>
<div class="abs" style="left:1269.0px;top:1149.92px;width:221.9000000000001px;height:2px;background:rgba(0,0,0,.05)"></div>
<div class="abs hl" style="left:1112.9px;top:1189.95px;width:152.19999999999982px"></div>
<div class="abs hl" style="left:1269.0px;top:1189.95px;width:2183.0px"></div>
<div class="abs" style="left:1269.0px;top:1189.95px;width:221.9000000000001px;height:2px;background:rgba(0,0,0,.05)"></div>
<div class="abs hl" style="left:1112.9px;top:1229.98px;width:152.19999999999982px"></div>
<div class="abs hl" style="left:1269.0px;top:1229.98px;width:2183.0px"></div>
<div class="abs" style="left:1269.0px;top:1229.98px;width:221.9000000000001px;height:2px;background:rgba(0,0,0,.05)"></div>
<div class="abs hl" style="left:1112.9px;top:1270.01px;width:152.19999999999982px"></div>
<div class="abs hl" style="left:1269.0px;top:1270.01px;width:2183.0px"></div>
<div class="abs" style="left:1269.0px;top:1270.01px;width:221.9000000000001px;height:2px;background:rgba(0,0,0,.05)"></div>
<div class="abs hl" style="left:1112.9px;top:1310.04px;width:152.19999999999982px"></div>
<div class="abs hl" style="left:1269.0px;top:1310.04px;width:2183.0px"></div>
<div class="abs" style="left:1269.0px;top:1310.04px;width:221.9000000000001px;height:2px;background:rgba(0,0,0,.05)"></div>
<div class="abs hl" style="left:1112.9px;top:1350.07px;width:152.19999999999982px"></div>
<div class="abs hl" style="left:1269.0px;top:1350.07px;width:2183.0px"></div>
<div class="abs" style="left:1269.0px;top:1350.07px;width:221.9000000000001px;height:2px;background:rgba(0,0,0,.05)"></div>
<div class="abs" style="left:1111px;top:1389.10px;width:154.0999999999999px;height:3.7px;background:#a2a2a2"></div>
<div class="abs" style="left:1269.0px;top:1389.10px;width:2185.0px;height:3.7px;background:#a2a2a2"></div>
<div class="abs hl" style="left:1112.9px;top:1430.13px;width:152.19999999999982px"></div>
<div class="abs hl" style="left:1269.0px;top:1430.13px;width:2183.0px"></div>
<div class="abs" style="left:1269.0px;top:1430.13px;width:221.9000000000001px;height:2px;background:rgba(0,0,0,.05)"></div>
<div class="abs hl" style="left:1112.9px;top:1470.16px;width:152.19999999999982px"></div>
<div class="abs hl" style="left:1269.0px;top:1470.16px;width:2183.0px"></div>
<div class="abs" style="left:1269.0px;top:1470.16px;width:221.9000000000001px;height:2px;background:rgba(0,0,0,.05)"></div>
<div class="abs" style="left:1207.2px;top:149.17px;width:5.6px;height:40.53px;background:#e3e3e3"></div>
<div class="abs" style="left:1207.2px;top:189.20px;width:5.6px;height:40.53px;background:#e3e3e3"></div>
<div class="abs" style="left:1207.2px;top:229.23px;width:5.6px;height:40.53px;background:#e3e3e3"></div>
<div class="abs" style="left:1207.2px;top:269.26px;width:5.6px;height:40.53px;background:#e3e3e3"></div>
<div class="abs" style="left:1207.2px;top:309.29px;width:5.6px;height:40.53px;background:#e3e3e3"></div>
<div class="abs" style="left:1207.2px;top:349.32px;width:5.6px;height:40.53px;background:#e3e3e3"></div>
<div class="abs" style="left:1207.2px;top:389.35px;width:5.6px;height:40.53px;background:#e3e3e3"></div>
<div class="abs" style="left:1207.2px;top:432.08px;width:5.6px;height:37.83px;background:#8bc34a"></div>
<div class="abs" style="left:1207.2px;top:469.41px;width:5.6px;height:40.53px;background:#8bc34a"></div>
<div class="abs" style="left:1207.2px;top:509.44px;width:5.6px;height:40.53px;background:#8bc34a"></div>
<div class="abs" style="left:1207.2px;top:549.47px;width:5.6px;height:40.53px;background:#8bc34a"></div>
<div class="abs" style="left:1207.2px;top:589.50px;width:5.6px;height:40.53px;background:#8bc34a"></div>
<div class="abs" style="left:1207.2px;top:629.53px;width:5.6px;height:40.53px;background:#8bc34a"></div>
<div class="abs" style="left:1207.2px;top:669.56px;width:5.6px;height:40.53px;background:#8bc34a"></div>
<div class="abs" style="left:1207.2px;top:709.59px;width:5.6px;height:40.53px;background:#8bc34a"></div>
<div class="abs" style="left:1207.2px;top:749.62px;width:5.6px;height:40.53px;background:#8bc34a"></div>
<div class="abs" style="left:1207.2px;top:789.65px;width:5.6px;height:40.53px;background:#8bc34a"></div>
<div class="abs" style="left:1207.2px;top:829.68px;width:5.6px;height:40.53px;background:#8bc34a"></div>
<div class="abs" style="left:1207.2px;top:869.71px;width:5.6px;height:40.53px;background:#8bc34a"></div>
<div class="abs" style="left:1207.2px;top:912.44px;width:5.6px;height:37.83px;background:#8bc34a"></div>
<div class="abs" style="left:1207.2px;top:949.77px;width:5.6px;height:40.53px;background:#8bc34a"></div>
<div class="abs" style="left:1207.2px;top:989.80px;width:5.6px;height:40.53px;background:#8bc34a"></div>
<div class="abs" style="left:1207.2px;top:1029.83px;width:5.6px;height:40.53px;background:#8bc34a"></div>
<div class="abs" style="left:1207.2px;top:1069.86px;width:5.6px;height:40.53px;background:#8bc34a"></div>
<div class="abs" style="left:1207.2px;top:1109.89px;width:5.6px;height:40.53px;background:#8bc34a"></div>
<div class="abs" style="left:1207.2px;top:1149.92px;width:5.6px;height:40.53px;background:#8bc34a"></div>
<div class="abs" style="left:1207.2px;top:1189.95px;width:5.6px;height:40.53px;background:#8bc34a"></div>
<div class="abs" style="left:1207.2px;top:1229.98px;width:5.6px;height:40.53px;background:#8bc34a"></div>
<div class="abs" style="left:1207.2px;top:1270.01px;width:5.6px;height:40.53px;background:#8bc34a"></div>
<div class="abs" style="left:1207.2px;top:1310.04px;width:5.6px;height:40.53px;background:#8bc34a"></div>
<div class="abs" style="left:1207.2px;top:1350.07px;width:5.6px;height:40.53px;background:#8bc34a"></div>
<div class="abs" style="left:1207.2px;top:1392.80px;width:5.6px;height:37.83px;background:#8bc34a"></div>
<div class="abs" style="left:1207.2px;top:1430.13px;width:5.6px;height:40.53px;background:#8bc34a"></div>
<div class="abs vl" style="left:1379.30px;top:168.8px;height:1265.2px"></div>
<div class="abs vl" style="left:1490.90px;top:168.8px;height:1265.2px"></div>
<div class="abs vl" style="left:1701.10px;top:168.8px;height:1265.2px"></div>
<div class="abs vl" style="left:1911.30px;top:168.8px;height:1265.2px"></div>
<div class="abs vl" style="left:2121.50px;top:168.8px;height:1265.2px"></div>
<div class="abs vl" style="left:2331.60px;top:168.8px;height:1265.2px"></div>
<div class="abs vl" style="left:2541.80px;top:168.8px;height:1265.2px"></div>
<div class="abs vl" style="left:2752.00px;top:168.8px;height:1265.2px"></div>
<div class="abs vl" style="left:3452.00px;top:168.8px;height:1265.2px"></div>
<div class="abs" style="left:1379.3px;top:168.8px;width:2px;height:1265.2px;background:rgba(0,0,0,.06)"></div>
<div class="abs" style="left:1265.1px;top:85px;width:3.9px;height:1349px;background:#e6e6e8"></div>
<div class="abs" style="left:1266.5px;top:85px;width:1.6px;height:1349px;background:#d2d2d8"></div>
<div class="abs" style="left:1112.9px;top:85px;width:152.19999999999982px;height:81.6px;background:#fff"></div>
<div class="abs" style="left:1269.0px;top:85px;width:1483.0px;height:81.6px;background:#ffffdb"></div>
<div class="abs" style="left:2752.0px;top:85px;width:702.0px;height:81.6px;background:#ffffe4"></div>
<div class="abs" style="left:1379.3px;top:85px;width:111.60000000000014px;height:81.6px;background:#c8c8c8"></div>
<div class="hc" style="left:1269.0px;top:94.68px;width:110.3px;color:#000;text-align:center;">P Typ</div>
<div class="hc" style="left:1269.0px;top:134.68px;width:110.3px;color:#000;text-align:center">PT</div>
<svg class="abs" style="left:1367.2px;top:87.1px" width="12.1" height="11.7" viewBox="0 0 12.1 11.7"><path d="M0 0H12.100V11.700Z" fill="#18a5ee"/></svg>
<div class="hc" style="left:1381.3px;top:94.68px;width:109.6px;color:#2e2e2e;text-align:center;">Periode</div>
<div class="hc" style="left:1381.3px;top:134.68px;width:109.6px;color:#2e2e2e;text-align:center">P</div>
<svg class="abs" style="left:1478.8px;top:87.1px" width="12.1" height="11.7" viewBox="0 0 12.1 11.7"><path d="M0 0H12.100V11.700Z" fill="#18a5ee"/></svg>
<div class="hc" style="left:1492.9px;top:94.68px;width:208.2px;color:#000;text-align:center;">Senderkonto</div>
<div class="hc" style="left:1492.9px;top:134.68px;width:208.2px;color:#000;text-align:center">SEKTO</div>
<svg class="abs" style="left:1689.0px;top:87.1px" width="12.1" height="11.7" viewBox="0 0 12.1 11.7"><path d="M0 0H12.100V11.700Z" fill="#18a5ee"/></svg>
<div class="hc" style="left:1703.1px;top:94.68px;width:208.2px;color:#000;text-align:left;padding-left:5.8px;">Senderkostenstelle</div>
<div class="hc" style="left:1703.1px;top:134.68px;width:208.2px;color:#000;text-align:center">SEKST</div>
<svg class="abs" style="left:1899.2px;top:87.1px" width="12.1" height="11.7" viewBox="0 0 12.1 11.7"><path d="M0 0H12.100V11.700Z" fill="#18a5ee"/></svg>
<div class="hc" style="left:1913.3px;top:94.68px;width:208.2px;color:#000;text-align:left;padding-left:5.8px;">Empfängerkostenstelle</div>
<div class="hc" style="left:1913.3px;top:134.68px;width:208.2px;color:#000;text-align:center">EMKTO</div>
<svg class="abs" style="left:2109.4px;top:87.1px" width="12.1" height="11.7" viewBox="0 0 12.1 11.7"><path d="M0 0H12.100V11.700Z" fill="#18a5ee"/></svg>
<div class="hc" style="left:2123.5px;top:94.68px;width:208.1px;color:#000;text-align:center;">Empfängerkonto</div>
<div class="hc" style="left:2123.5px;top:134.68px;width:208.1px;color:#000;text-align:center">EMKST</div>
<svg class="abs" style="left:2319.5px;top:87.1px" width="12.1" height="11.7" viewBox="0 0 12.1 11.7"><path d="M0 0H12.100V11.700Z" fill="#18a5ee"/></svg>
<div class="hc" style="left:2333.6px;top:94.68px;width:208.2px;color:#000;text-align:center;">Prozent</div>
<div class="hc" style="left:2333.6px;top:134.68px;width:208.2px;color:#000;text-align:center">PRZT</div>
<svg class="abs" style="left:2529.7px;top:87.1px" width="12.1" height="11.7" viewBox="0 0 12.1 11.7"><path d="M0 0H12.100V11.700Z" fill="#18a5ee"/></svg>
<div class="hc" style="left:2543.8px;top:94.68px;width:208.2px;color:#000;text-align:center;">Tagesschieber</div>
<div class="hc" style="left:2543.8px;top:134.68px;width:208.2px;color:#000;text-align:center">TAGSCHIEB</div>
<svg class="abs" style="left:2739.9px;top:87.1px" width="12.1" height="11.7" viewBox="0 0 12.1 11.7"><path d="M0 0H12.100V11.700Z" fill="#18a5ee"/></svg>
<div class="hc" style="left:2754.0px;top:94.68px;width:698.0px;color:#000;text-align:center;">Bemerkung</div>
<div class="hc" style="left:2754.0px;top:134.68px;width:698.0px;color:#000;text-align:center">BEM</div>
<div class="abs hl" style="left:1112.9px;top:125.2px;width:152.19999999999982px;height:1.9px"></div>
<div class="abs hl" style="left:1269.0px;top:125.2px;width:2183.0px;height:1.9px"></div>
<div class="abs hl" style="left:1269.0px;top:85px;width:2185.0px;height:1.7px"></div>
<div class="abs vl" style="left:1379.30px;top:85px;height:81.6px"></div>
<div class="abs vl" style="left:1490.90px;top:85px;height:81.6px"></div>
<div class="abs vl" style="left:1701.10px;top:85px;height:81.6px"></div>
<div class="abs vl" style="left:1911.30px;top:85px;height:81.6px"></div>
<div class="abs vl" style="left:2121.50px;top:85px;height:81.6px"></div>
<div class="abs vl" style="left:2331.60px;top:85px;height:81.6px"></div>
<div class="abs vl" style="left:2541.80px;top:85px;height:81.6px"></div>
<div class="abs vl" style="left:2752.00px;top:85px;height:81.6px"></div>
<div class="abs vl" style="left:3452.00px;top:85px;height:81.6px"></div>
<div class="abs" style="left:1379.3px;top:85px;width:111.60000000000014px;height:81.6px;border-left:2px solid rgba(0,0,0,.09);border-top:1.700px solid rgba(0,0,0,.09)"></div>
<div class="abs vl" style="left:1209.2px;top:85px;height:81.6px"></div>
<div class="abs" style="left:1111px;top:166.6px;width:2343.0px;height:2.2px;background:#cdcdd0"></div>
<div class="abs" style="left:3454.0px;top:165.5px;width:330.0px;height:3.2px;background:#c9c9c9"></div>
<div class="abs" style="left:1111.2px;top:86px;width:1.7px;height:1348px;background:#f0f0f0"></div>
<div class="abs" style="left:1311.3px;top:2px;width:1.6px;height:83px;background:#d4d4d4"></div>
<div class="abs" style="left:1392.8px;top:2px;width:1.6px;height:83px;background:#d4d4d4"></div>
<div class="abs" style="left:2088.4px;top:2px;width:1.6px;height:83px;background:#d4d4d4"></div>
<div class="abs" style="left:2570.4px;top:2px;width:1.6px;height:83px;background:#d4d4d4"></div>
<div class="abs" style="left:2812.6px;top:2px;width:1.6px;height:83px;background:#d4d4d4"></div>
<svg class="abs" style="left:1167.0px;top:20.0px" width="48" height="48" viewBox="0 0 24 24" fill="#828282"><path d="M17 3H5c-1.11 0-2 .9-2 2v14c0 1.1.89 2 2 2h14c1.1 0 2-.9 2-2V7l-4-4zm-5 16c-1.660 0-3-1.340-3-3s1.340-3 3-3 3 1.340 3 3-1.340 3-3 3zm3-10H5V5h10v4z"/></svg>
<svg class="abs" style="left:1247.3px;top:20.0px" width="48" height="48" viewBox="0 0 24 24" fill="#828282"><path d="M14 12c0-1.100-.900-2-2-2s-2 .900-2 2 .900 2 2 2 2-.900 2-2zm-2-9c-4.970 0-9 4.030-9 9H0l4 4 4-4H5c0-3.870 3.130-7 7-7s7 3.130 7 7-3.130 7-7 7c-1.510 0-2.910-.490-4.060-1.300l-1.420 1.440C8.040 20.300 9.940 21 12 21c4.970 0 9-4.030 9-9s-4.030-9-9-9z"/></svg>
<svg class="abs" style="left:1329px;top:37.4px" width="15" height="10.500" viewBox="0 0 15 10.500"><path d="M0 0H14.600L7.300 10.200Z" fill="#828282"/></svg>
<div class="abs fx">fx</div>
<div class="abs inp0"><span>0</span></div>
<div class="abs sdr" style="left:1537px">S</div>
<div class="abs sdr" style="left:1618px">D</div>
<div class="abs sdr" style="left:1697.5px">R</div>
<svg class="abs" style="left:1791px;top:28px" width="32" height="32.500" viewBox="0 0 32 32.500"><path d="M12.200 0h7.600v12.400H32v7.600H19.800v12.500h-7.600V20H0v-7.600h12.200z" fill="#828282"/></svg>
<div class="abs" style="left:1871.3px;top:40.6px;width:31.6px;height:7.2px;background:#828282"></div>
<svg class="abs" style="left:1951.500px;top:28px" width="33" height="32.500" viewBox="0 0 33 32.500"><path d="M5.500 0L16.500 10.800 27.500 0 33 5.400 22 16.250 33 27.100 27.500 32.500 16.500 21.700 5.500 32.500 0 27.100 11 16.250 0 5.400z" fill="#828282"/></svg>
<svg class="abs" style="left:2031px;top:27.500px" width="34" height="33" viewBox="0 0 34 33"><path d="M27.500 .5L33 6 6.500 32.500 1 27z" fill="#828282"/><circle cx="6" cy="5.500" r="4.900" fill="#828282"/><circle cx="28" cy="27.500" r="4.900" fill="#828282"/></svg>
<svg class="abs" style="left:2113px;top:27.500px" width="33.800" height="33.500" viewBox="0 0 512 512" fill="#828282"><path d="M505 442.700L405.300 343c-4.500-4.500-10.600-7-17-7H372c27.600-35.300 44-79.700 44-128C416 93.100 322.900 0 208 0S0 93.100 0 208s93.100 208 208 208c48.300 0 92.700-16.400 128-44v16.300c0 6.400 2.500 12.500 7 17l99.700 99.700c9.400 9.400 24.600 9.400 33.900 0l28.300-28.300c9.400-9.400 9.400-24.600.1-34zM208 336c-70.700 0-128-57.200-128-128 0-70.700 57.200-128 128-128 70.700 0 128 57.200 128 128 0 70.700-57.200 128-128 128z"/></svg>
<svg class="abs" style="left:2190px;top:28px" width="40" height="32" viewBox="0 0 40 32"><rect width="40" height="32" rx="3.500" fill="#828282"/><circle cx="18.700" cy="14.800" r="6.700" fill="none" stroke="#fafafa" stroke-width="3.600"/><path d="M23.500 19.600L30.500 26.600" stroke="#fafafa" stroke-width="4.200"/></svg>
<div class="abs" style="left:2271.9px;top:32px;width:36px;height:3.8px;background:#828282"></div>
<div class="abs" style="left:2277.9px;top:42.3px;width:23.9px;height:3.8px;background:#828282"></div>
<div class="abs" style="left:2285.9px;top:52.2px;width:8px;height:3.8px;background:#828282"></div>
<svg class="abs" style="left:2345.8px;top:20.2px" width="48" height="48" viewBox="0 0 24 24" fill="#828282"><path d="M3.900 12c0-1.710 1.390-3.100 3.100-3.100h4V7H7c-2.760 0-5 2.240-5 5s2.240 5 5 5h4v-1.900H7c-1.710 0-3.100-1.390-3.100-3.100zM8 13h8v-2H8v2zm9-6h-4v1.900h4c1.710 0 3.100 1.390 3.100 3.100s-1.390 3.100-3.100 3.100h-4V17h4c2.760 0 5-2.240 5-5s-2.240-5-5-5z"/></svg>
<div class="abs" style="left:2409.8px;top:2.8px;width:80.2px;height:80.2px;border-radius:50%;background:#dcdcdc"></div>
<div class="abs vs">VS</div>
<svg class="abs" style="left:2445.500px;top:39.300px" width="25" height="25" viewBox="0 0 28 28" fill="#828282"><path d="M1.800 20.200L17.300 4.700 22.700 10.100 7.200 25.600H1.800zM18.900 3.100L21.200 .8a1.400 1.400 0 0 1 2 0L26.700 4.300a1.400 1.400 0 0 1 0 2L24.400 8.600z"/></svg>
<svg class="abs" style="left:2511px;top:25px" width="40" height="40" viewBox="0 0 40 40" fill="none" stroke="#828282">
<path d="M5.600 15.200A11.800 11.800 0 0 1 26.400 9.600" stroke-width="4.100"/>
<path d="M28.800 18.800A11.800 11.800 0 0 1 8 24.400" stroke-width="4.100"/>
<path d="M31 3.600V14.900H19.700z" fill="#828282" stroke="none"/>
<path d="M3.100 30.800V19.300H14.600z" fill="#828282" stroke="none"/>
<path d="M26.200 26.400L36.600 36.400" stroke-width="4.100"/>
</svg>
<svg class="abs" style="left:2588.0px;top:19.9px" width="48" height="48" viewBox="0 0 24 24" fill="#828282"><path d="M14 2H6c-1.100 0-1.990.900-1.990 2L4 20c0 1.100.890 2 1.990 2H18c1.100 0 2-.900 2-2V8l-6-6zm2 16H8v-2h8v2zm0-4H8v-2h8v2zm-3-5V3.500L18.500 9H13z"/></svg>
<svg class="abs" style="left:2668.0px;top:19.9px" width="48" height="48" viewBox="0 0 24 24" fill="#828282"><path d="M21 6h-2v9H6v2c0 .550.450 1 1 1h11l4 4V7c0-.550-.450-1-1-1zm-4 6V3c0-.550-.450-1-1-1H3c-.550 0-1 .450-1 1v14l4-4h10c.550 0 1-.450 1-1z"/></svg>
<svg class="abs" style="left:2748.0px;top:19.9px" width="48" height="48" viewBox="0 0 24 24" fill="#828282"><path d="M2 12.500C2 9.460 4.460 7 7.500 7H18c2.210 0 4 1.790 4 4s-1.790 4-4 4H9.500C8.120 15 7 13.880 7 12.500S8.120 10 9.500 10H17v2H9.410c-.550 0-.550 1 0 1H18c1.100 0 2-.900 2-2s-.900-2-2-2H7.500C5.570 9 4 10.570 4 12.500S5.570 16 7.500 16H17v2H7.500C4.460 18 2 15.540 2 12.500z"/></svg>
<div class="abs besch"><span>Beschreibung...</span></div>
<svg class="abs" style="left:560px;top:360px" width="480" height="380" viewBox="560 360 480 380" fill="none" stroke="#ffa50a" stroke-width="11.600" stroke-linecap="round" stroke-linejoin="round">
<path d="M594.1 389.2 Q647.9 386.5 667.3 386.5 Q686.8 386.5 710.1 388.1 Q733.5 389.6 768.5 390.0 Q803.6 390.4 834.7 391.5 Q865.8 392.7 889.1 394.9 Q912.5 397 928.1 397.9 Q943.7 398.9 951.5 402.4 Q959.3 405.9 968.0 413.1 Q976.8 420.3 985.5 432.0 Q994.3 443.7 998.6 452.4 Q1002.9 461.2 1004.5 474.9 Q1006 488.5 1005.6 517.6 Q1005.2 546.8 1005.2 568.2 Q1005.2 589.7 1000.7 605.2 Q996.2 620.8 991.4 634.4 Q986.5 648 982.6 659.7 Q978.7 671.4 972.9 676.2 Q967 681.1 955.4 687.0 Q943.7 692.8 927.6 699.1 L911.5 705.5"/>
<path d="M932 670.6 Q918 684 909.6 696.5 Q911 704 915 707 Q930 716 942.9 724"/>
</svg>
<div class="abs" style="left:0;top:0;width:3566px;height:1.3px;background:#f9bb3a"></div>
</body></html>
